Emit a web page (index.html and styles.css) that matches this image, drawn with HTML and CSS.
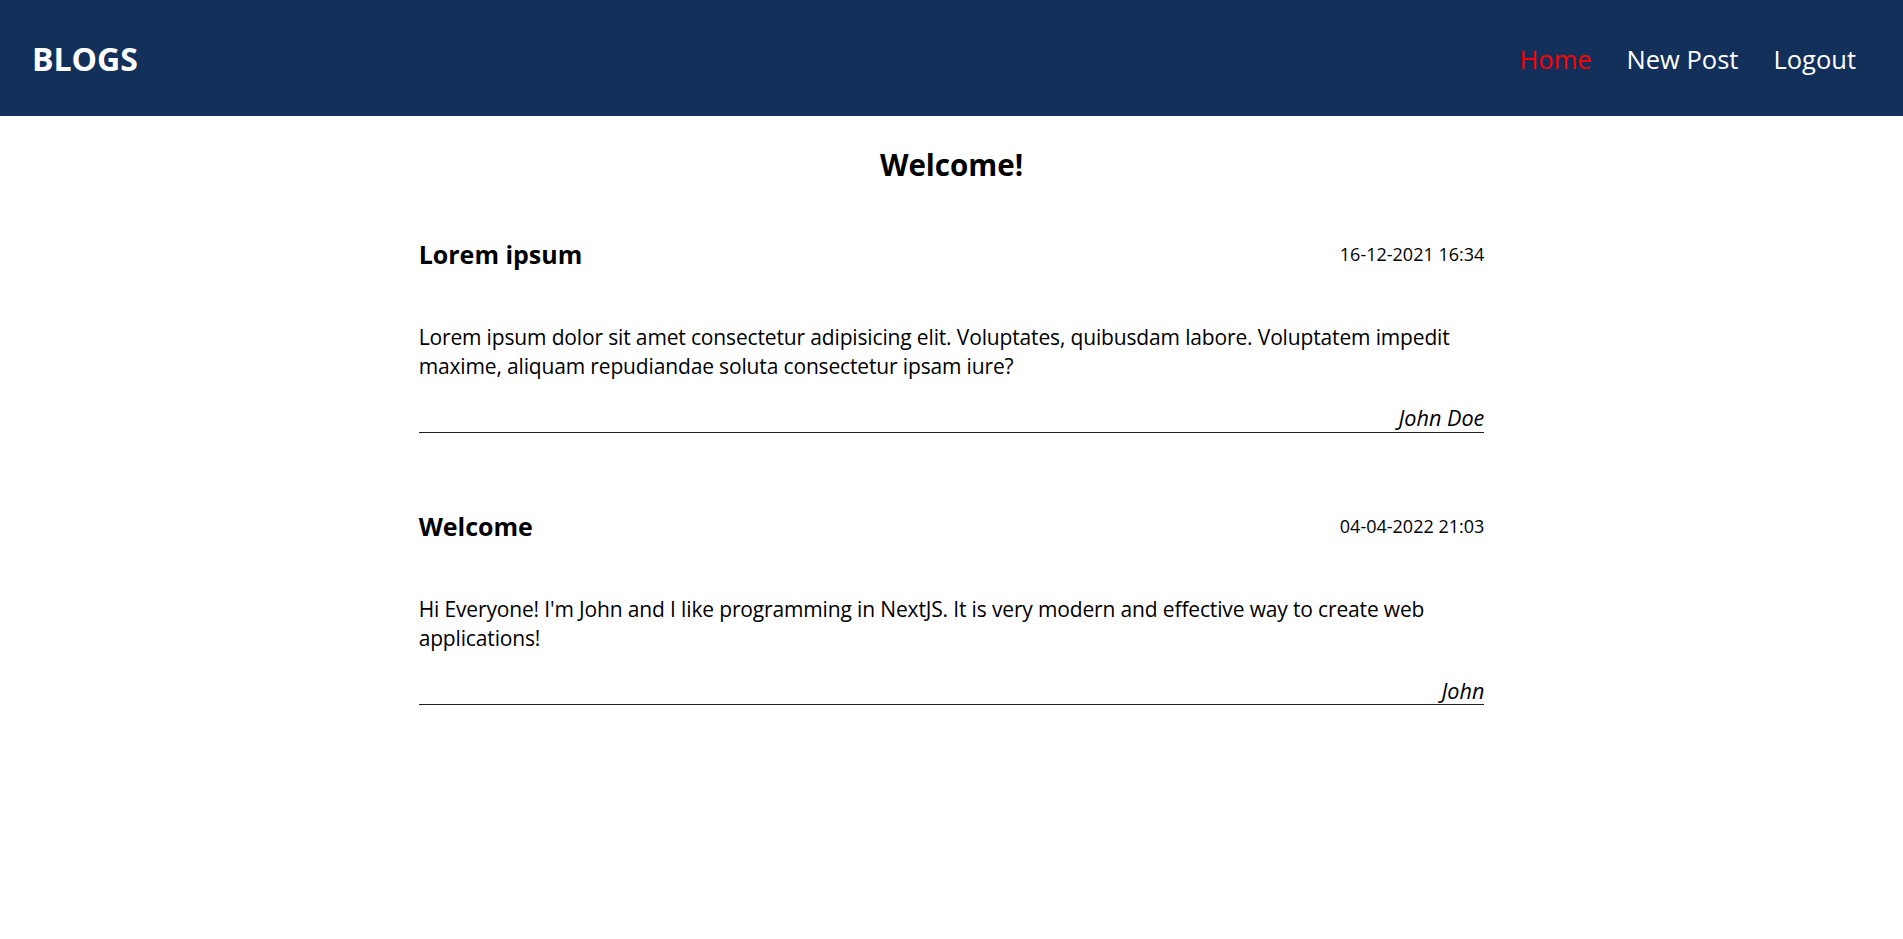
FILE: index.html
```html
<!DOCTYPE html>
<html lang="en">
<head>
<meta charset="utf-8">
<title>Blogs</title>
<link rel="stylesheet" href="styles.css">
</head>
<body>
<header class="topbar">
  <a class="brand" href="#">BLOGS</a>
  <nav class="nav">
    <a class="nav-link active" href="#">Home</a>
    <a class="nav-link" href="#">New Post</a>
    <a class="nav-link" href="#">Logout</a>
  </nav>
</header>
<main class="content">
  <h1 class="page-title">Welcome!</h1>
  <section class="posts">
    <article class="post">
      <div class="post-head">
        <h2 class="post-title">Lorem ipsum</h2>
        <span class="post-date">16-12-2021 16:34</span>
      </div>
      <p class="post-body">Lorem ipsum dolor sit amet consectetur adipisicing elit. Voluptates, quibusdam labore. Voluptatem impedit maxime, aliquam repudiandae soluta consectetur ipsam iure?</p>
      <div class="post-author">John Doe</div>
    </article>
    <article class="post">
      <div class="post-head">
        <h2 class="post-title">Welcome</h2>
        <span class="post-date">04-04-2022 21:03</span>
      </div>
      <p class="post-body">Hi Everyone! I'm John and I like programming in NextJS. It is very modern and effective way to create web applications!</p>
      <div class="post-author">John</div>
    </article>
  </section>
</main>
</body>
</html>
```
FILE: styles.css
```css
* { box-sizing: border-box; }

body {
  margin: 0;
  font-family: "Open Sans", "Noto Sans", sans-serif;
  color: #000;
  background: #fff;
}

.topbar {
  height: 116px;
  background: #13305a;
  display: flex;
  align-items: center;
  justify-content: space-between;
  padding: 2px 47px 0 32px;
}

.brand {
  color: #fff;
  text-decoration: none;
  font-weight: 700;
  font-size: 32px;
  line-height: 44px;
}

.nav {
  display: flex;
  gap: 35px;
}

.nav-link {
  color: #fff;
  text-decoration: none;
  font-size: 25.5px;
  line-height: 36px;
}

.nav-link.active { color: #ff0000; }

.content {
  width: 56%;
  margin: 0 auto;
}

.page-title {
  margin: 30px 0 0;
  text-align: center;
  font-size: 29.5px;
  line-height: 38px;
  font-weight: 700;
}

.posts {
  margin-top: 52px;
}

.post {
  margin-bottom: 75px;
}

.post-head {
  display: flex;
  justify-content: space-between;
  align-items: center;
}

.post-title {
  margin: 0;
  font-size: 25px;
  line-height: 36px;
  font-weight: 700;
}

.post-date {
  font-size: 18px;
  line-height: 24px;
}

.post-body {
  margin: 51px 0 23px;
  font-size: 21px;
  letter-spacing: -0.15px;
  line-height: 28.7px;
}

.post-author {
  padding-top: 2px;
  text-align: right;
  font-style: italic;
  font-size: 21.6px;
  line-height: 26.7px;
  border-bottom: 1px solid #222;
}
```
